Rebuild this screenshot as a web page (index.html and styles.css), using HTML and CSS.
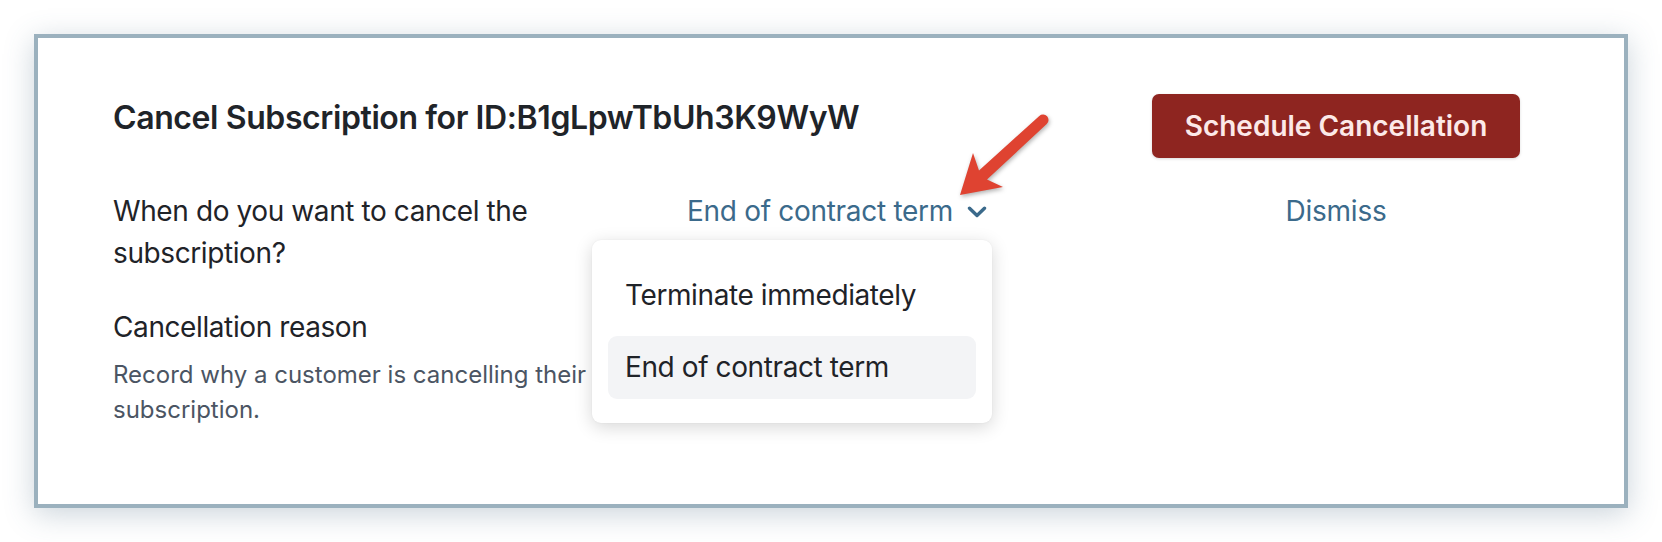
FILE: index.html
```html
<!DOCTYPE html>
<html lang="en">
<head>
  <meta charset="UTF-8">
  <title>Cancel Subscription</title>
  <link rel="stylesheet" href="styles.css">
</head>
<body>

<div class="card">
  <div class="grid">
    <h1 class="title">Cancel Subscription for ID:B1gLpwTbUh3K9WyW</h1>
    <button class="btn-danger" type="button">Schedule Cancellation</button>

    <p class="question">When do you want to cancel the subscription?</p>
    <div class="select">
      <span class="select-value">End of contract term</span>
      <svg class="chevron" width="20" height="12" viewBox="0 0 20 12">
        <path d="M2.5 2.2 L10 9.4 L17.5 2.2" fill="none" stroke="currentColor" stroke-width="3.4" stroke-linecap="round" stroke-linejoin="round"/>
      </svg>
      <ul class="menu">
        <li>Terminate immediately</li>
        <li class="active">End of contract term</li>
      </ul>
    </div>
    <a href="javascript:void(0);" class="dismiss">Dismiss</a>

    <div class="reason">
      <h3>Cancellation reason</h3>
      <p>Record why a customer is cancelling their subscription.</p>
    </div>
  </div>
</div>

<!-- annotation arrow -->
<svg class="pointer" width="120" height="110" viewBox="0 0 120 110">
  <path d="M20 95 L33 53 L39 70.6 L99.3 15.9 A5.5 5.5 0 0 1 106.7 24.1 L47 79.4 L63 87 Z" fill="#df4331"/>
</svg>

</body>
</html>
```

FILE: styles.css
```css
* {
  margin: 0;
  padding: 0;
  list-style: none;
  box-sizing: border-box;
}
body {
  font-family: Inter, "Noto Sans", sans-serif;
  color: #1f2328;
  background-color: #fff;
  position: relative;
}

.card {
  margin: 34px;
  height: 474px;
  border: 4px solid #9bb1be;
  background-color: #fff;
  padding: 56px 104px 0 75px;
  box-shadow: 0 6px 28px rgba(70, 100, 125, .28);
}

.grid {
  display: grid;
  grid-template-columns: 500px 1fr 368px;
  column-gap: 74px;
  row-gap: 32px;
  align-items: start;
}

.title {
  grid-column: 1 / 3;
  margin-top: 4px;
  font-size: 32px;
  line-height: 40px;
  font-weight: 600;
  letter-spacing: -0.4px;
  color: #1f2429;
}

.btn-danger {
  height: 64px;
  border: 0;
  border-radius: 7px;
  background-color: #8e2520;
  color: #fce9e8;
  font-family: inherit;
  font-size: 28px;
  font-weight: 600;
  box-shadow: 0 1px 3px rgba(0, 0, 0, .15);
  cursor: pointer;
}

.question {
  font-size: 28px;
  line-height: 42px;
  letter-spacing: -0.4px;
}

.select {
  position: relative;
  justify-self: start;
  display: flex;
  align-items: center;
  height: 42px;
  color: #3b6a8b;
  font-size: 28px;
  letter-spacing: -0.3px;
  cursor: pointer;
}
.chevron {
  margin-left: 14px;
  margin-top: 1px;
}

.menu {
  position: absolute;
  top: 50px;
  left: -95px;
  width: 400px;
  padding: 24px 16px;
  display: flex;
  flex-direction: column;
  gap: 9px;
  background-color: #fff;
  border-radius: 9px;
  box-shadow: 0 4px 18px rgba(0, 0, 0, .16), 0 0 2px rgba(0, 0, 0, .06);
  letter-spacing: -0.4px;
  z-index: 2;
}
.menu li {
  height: 63px;
  line-height: 63px;
  padding: 0 17px;
  border-radius: 9px;
  color: #1f2328;
  white-space: nowrap;
}
.menu li.active {
  background-color: #f3f4f6;
}

.dismiss {
  justify-self: center;
  font-size: 28px;
  line-height: 42px;
  letter-spacing: -0.2px;
  color: #3b6a8b;
  text-decoration: none;
}

.reason h3 {
  font-size: 28px;
  line-height: 42px;
  font-weight: 400;
  letter-spacing: -0.4px;
}
.reason p {
  margin-top: 9px;
  font-size: 24px;
  line-height: 35px;
  color: #4b5563;
}

.pointer {
  position: absolute;
  left: 940px;
  top: 100px;
  z-index: 3;
  filter: drop-shadow(1px 2px 2px rgba(0, 0, 0, .3));
}
```
